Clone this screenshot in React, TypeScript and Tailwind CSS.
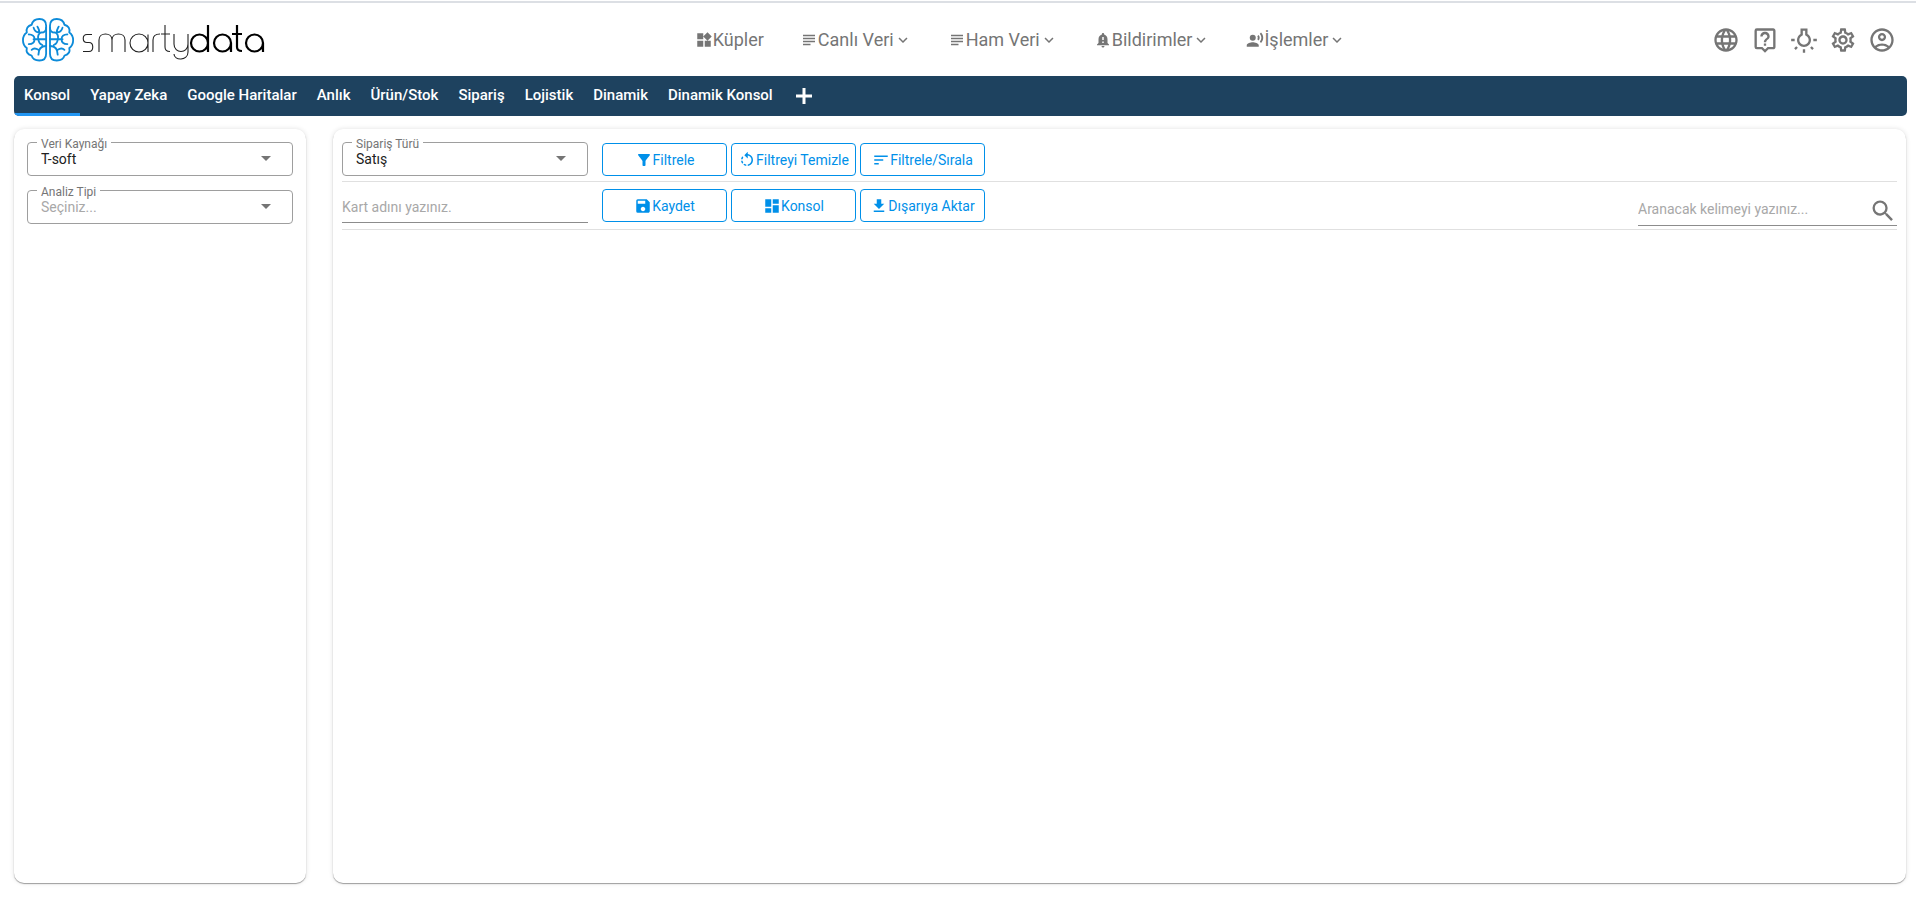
import React, { useId } from "react";
import {
  MdWidgets,
  MdSubject,
  MdNotificationImportant,
  MdRecordVoiceOver,
  MdExpandMore,
  MdLanguage,
  MdOutlineLiveHelp,
  MdOutlineWbIncandescent,
  MdOutlineSettings,
  MdOutlineAccountCircle,
  MdFilterAlt,
  MdRotateLeft,
  MdSort,
  MdSave,
  MdDashboard,
  MdDownload,
  MdSearch,
  MdArrowDropDown,
} from "react-icons/md";
import type { IconType } from "react-icons";

const menu: { label: string; icon: IconType; dropdown: boolean }[] = [
  { label: "Küpler", icon: MdWidgets, dropdown: false },
  { label: "Canlı Veri", icon: MdSubject, dropdown: true },
  { label: "Ham Veri", icon: MdSubject, dropdown: true },
  { label: "Bildirimler", icon: MdNotificationImportant, dropdown: true },
  { label: "İşlemler", icon: MdRecordVoiceOver, dropdown: true },
];

const tools: { label: string; icon: IconType }[] = [
  { label: "Dil", icon: MdLanguage },
  { label: "Yardım", icon: MdOutlineLiveHelp },
  { label: "Tema", icon: MdOutlineWbIncandescent },
  { label: "Ayarlar", icon: MdOutlineSettings },
  { label: "Hesap", icon: MdOutlineAccountCircle },
];

const tabs = [
  "Konsol",
  "Yapay Zeka",
  "Google Haritalar",
  "Anlık",
  "Ürün/Stok",
  "Sipariş",
  "Lojistik",
  "Dinamik",
  "Dinamik Konsol",
];

function BrainHalf() {
  return (
    <>
      <path d="M25 8c0-4-2-7-7-7-4 0-7 2-8 6-4 1-6 4-5 8-3 2-4 5-4 8s1 6 4 8c-1 4 1 7 5 8 1 4 4 5 8 5 5 0 7-3 7-7z" />
      <path d="M12 22h13M7 17c4 0 6 2 6 5s-2 5-6 5M17 22c-1-3 0-6 3-7 3 0 5-2 5-5M17 22c0 4 2 5 4 6M12 10c1 4 3 5 6 5M18 15c0-3-1-4-2-6M25 29c-5 0-8 2-8 9M17 33c-3-2-5-2-7 0" />
    </>
  );
}

function Logo() {
  return (
    <a href="#" aria-label="smartydata" className="block pt-1">
      <svg viewBox="0 0 246 48" className="h-12 w-[246px]" fill="none">
        <g
          stroke="#0d8bd9"
          strokeWidth="1.9"
          strokeLinecap="round"
          strokeLinejoin="round"
          transform="scale(0.965)"
        >
          <BrainHalf />
          <g transform="translate(54 0) scale(-1 1)">
            <BrainHalf />
          </g>
        </g>
        <g stroke="#222" strokeWidth="1.1">
          <path d="M70 16.500h-5c-5 0-5 8 0 8h2c5 0 5 9 0 9h-6" />
          <path d="M77 34V22c0-8 13-8 13 0v12M90 22c0-8 13-8 13 0v12" />
          <path d="M126 34V16.500M126 25a9 9 0 1 0-18 0a9 9 0 1 0 18 0" />
          <path d="M131 34V22c0-4 3-6 7-6M143 7v22c0 3 2 4.500 5 4.500M139 16h9" />
          <path d="M152 16v10c0 10 14 10 14 0V16M166 26v8c0 9-14 9-14 2" />
        </g>
        <g stroke="#000" strokeWidth="2.200">
          <path d="M186 7v27M186 25a8.500 8.500 0 1 0-17 0a8.500 8.500 0 1 0 17 0" />
          <path d="M209 34V25a8.500 8.500 0 1 0-17 0a8.500 8.500 0 1 0 17 0" />
          <path d="M215 7v22c0 3 2 4 5 4M210 16h10" />
          <path d="M241 34V25a8.500 8.500 0 1 0-17 0a8.500 8.500 0 1 0 17 0" />
        </g>
      </svg>
    </a>
  );
}

function OutlinedSelect({ label, value, muted }: { label: string; value: string; muted?: boolean }) {
  const id = useId();
  return (
    <div className="relative w-full">
      <label htmlFor={id} className="absolute -top-1.5 left-2.5 bg-white px-1 text-xs leading-4 text-[#757575]">
        {label}
      </label>
      <select
        id={id}
        className={
          muted
            ? "block h-[34px] w-full appearance-none rounded border border-[#9e9e9e] bg-transparent px-[13px] text-sm text-[#a8a8a8]"
            : "block h-[34px] w-full appearance-none rounded border border-[#9e9e9e] bg-transparent px-[13px] text-sm text-[#212121]"
        }
      >
        <option>{value}</option>
      </select>
      <MdArrowDropDown className="pointer-events-none absolute top-1 right-[15px] size-6 text-[#757575]" />
    </div>
  );
}

function ActionButton({ label, icon: Icon }: { label: string; icon: IconType }) {
  return (
    <button
      type="button"
      className="flex h-[33px] w-[125px] items-center justify-center rounded border border-[#0090e9] text-sm whitespace-nowrap text-[#0090e9]"
    >
      <Icon className="size-[18px] shrink-0" />
      {label}
    </button>
  );
}

const card = "rounded-[10px] bg-white shadow-[0_1px_1px_rgba(0,0,0,0.35),0_0_5px_rgba(0,0,0,0.12)]";

export default function App() {
  return (
    <div className="flex min-h-screen flex-col bg-white font-['Roboto',sans-serif] text-sm">
      <div className="mt-px h-0.5 bg-[#dcdfe4]" />
      <header className="grid h-[73px] grid-cols-[6fr_auto_5fr] items-center pr-[9px] pl-[22px]">
        <Logo />
        <nav className="flex items-center gap-9 text-lg text-[#757575]">
          {menu.map(({ label, icon: Icon, dropdown }) => (
            <a key={label} href="#" className="flex items-center whitespace-nowrap">
              <Icon className="size-[18px]" />
              {label}
              {dropdown && <MdExpandMore className="size-[18px]" />}
            </a>
          ))}
        </nav>
        <div className="flex items-center justify-end gap-[11px] pr-[11px] text-[#757575]">
          {tools.map(({ label, icon: Icon }) => (
            <button key={label} type="button" aria-label={label}>
              <Icon className="size-7" />
            </button>
          ))}
        </div>
      </header>

      <nav className="mr-[9px] ml-3.5 flex h-10 overflow-hidden rounded-[5px] bg-[#1e425f] text-[15px] font-medium text-white">
        {tabs.map((tab, i) => (
          <a
            key={tab}
            href="#"
            className={
              i === 0
                ? "flex items-center border-b-[3px] border-[#2196f3] px-2.5 pt-[3px]"
                : "flex items-center px-2.5"
            }
          >
            {tab}
          </a>
        ))}
        <button type="button" aria-label="Ekle" className="px-2">
          <svg viewBox="0 0 26 26" className="size-[26px]" stroke="currentColor" strokeWidth="3">
            <path d="M13 5v16M5 13h16" />
          </svg>
        </button>
      </nav>

      <main className="mt-[13px] mr-2.5 mb-[34px] ml-3.5 flex grow gap-[27px]">
        <aside className={`${card} flex w-[292px] shrink-0 flex-col gap-3.5 px-[13px] pt-[13px]`}>
          <OutlinedSelect label="Veri Kaynağı" value="T-soft" />
          <OutlinedSelect label="Analiz Tipi" value="Seçiniz..." muted />
        </aside>

        <section className={`${card} grow px-[9px] pt-[13px]`}>
          <div className="flex h-10 gap-3.5 border-b border-[#e0e0e0]">
            <div className="w-[246px]">
              <OutlinedSelect label="Sipariş Türü" value="Satış" />
            </div>
            <div className="flex gap-1 pt-px">
              <ActionButton label="Filtrele" icon={MdFilterAlt} />
              <ActionButton label="Filtreyi Temizle" icon={MdRotateLeft} />
              <ActionButton label="Filtrele/Sırala" icon={MdSort} />
            </div>
          </div>
          <div className="flex h-12 gap-3.5 border-b border-[#e0e0e0]">
            <input
              type="text"
              aria-label="Kart adı"
              placeholder="Kart adını yazınız."
              className="mt-2.5 h-[31px] w-[246px] border-b border-[#8c8c8c] text-sm placeholder:text-[#a8a8a8]"
            />
            <div className="flex gap-1 pt-[7px]">
              <ActionButton label="Kaydet" icon={MdSave} />
              <ActionButton label="Konsol" icon={MdDashboard} />
              <ActionButton label="Dışarıya Aktar" icon={MdDownload} />
            </div>
            <div className="mt-2.5 ml-auto flex h-[34px] w-[259px] items-center border-b border-[#8c8c8c]">
              <input
                type="search"
                aria-label="Aranacak kelime"
                placeholder="Aranacak kelimeyi yazınız..."
                className="min-w-0 grow text-sm placeholder:text-[#a8a8a8]"
              />
              <button type="button" aria-label="Ara" className="self-end">
                <MdSearch className="size-7 text-[#757575]" />
              </button>
            </div>
          </div>
        </section>
      </main>
    </div>
  );
}
